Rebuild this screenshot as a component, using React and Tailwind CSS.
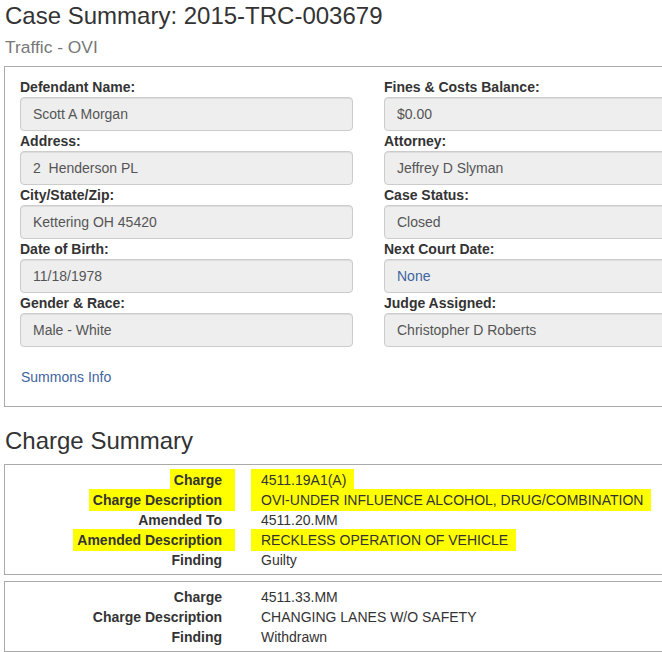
import React from "react";

const font = { fontFamily: '"Liberation Sans", Arial, Helvetica, sans-serif' };

function Field({ label, value, link }) {
  return (
    <div>
      <div className="text-[14px] leading-[20px] font-bold text-[#333]">{label}</div>
      <div className="h-[34px] rounded-[4px] border border-[#ccc] bg-[#eee] pl-[12px] flex items-center text-[14px] shadow-[inset_0_1px_1px_rgba(0,0,0,0.075)]">
        <span className={"whitespace-pre " + (link ? "text-[#41639f]" : "text-[#555]")}>{value}</span>
      </div>
    </div>
  );
}

function Row({ label, value, hl }) {
  return (
    <>
      <div className="text-right font-bold text-[#333]">
        {hl ? (
          <span className="bg-[#ffff00] pl-[4px] pr-[13px] -mr-[13px] py-[3px]">{label}</span>
        ) : (
          label
        )}
      </div>
      <div className="text-[#333]">
        {hl ? (
          <span className="bg-[#ffff00] pl-[10px] -ml-[10px] pr-[8px] py-[3px]">{value}</span>
        ) : (
          value
        )}
      </div>
    </>
  );
}

function ChargeBox({ rows, className }) {
  return (
    <div className={"w-[729px] border border-[#aaa] pt-[5px] pb-[4px] " + className}>
      <div className="grid grid-cols-[217px_1fr] gap-x-[39px] text-[14px] leading-[20px]">
        {rows.map((r, i) => (
          <Row key={i} {...r} />
        ))}
      </div>
    </div>
  );
}

export default function App() {
  return (
    <div className="w-[662px] h-[652px] overflow-hidden bg-white" style={font}>
      <div className="pl-[4px] pt-[1px]">
        <h1 className="pl-[1px] text-[24px] leading-[30px] text-[#333]">Case Summary: 2015-TRC-003679</h1>
        <div className="pl-[1px] mt-[5px] text-[17.4px] leading-[22px] text-[#777]">Traffic - OVI</div>

        <div className="mt-[8px] w-[729px] border border-[#aaa] px-[15px] pt-[10px] pb-[19px]">
          <div className="grid grid-cols-[333px_333px] gap-x-[31px]">
            <div>
              <Field label="Defendant Name:" value="Scott A Morgan" />
              <Field label="Address:" value="2  Henderson PL" />
              <Field label="City/State/Zip:" value="Kettering OH 45420" />
              <Field label="Date of Birth:" value="11/18/1978" />
              <Field label="Gender & Race:" value="Male - White" />
            </div>
            <div>
              <Field label="Fines & Costs Balance:" value="$0.00" />
              <Field label="Attorney:" value="Jeffrey D Slyman" />
              <Field label="Case Status:" value="Closed" />
              <Field label="Next Court Date:" value="None" link />
              <Field label="Judge Assigned:" value="Christopher D Roberts" />
            </div>
          </div>
          <div className="mt-[20px] pl-[1px] text-[14px] leading-[20px] text-[#41639f]">Summons Info</div>
        </div>

        <h2 className="pl-[1px] mt-[19px] text-[24px] leading-[30px] text-[#333]">Charge Summary</h2>

        <ChargeBox
          className="mt-[8px]"
          rows={[
            { label: "Charge", value: "4511.19A1(A)", hl: true },
            { label: "Charge Description", value: "OVI-UNDER INFLUENCE ALCOHOL, DRUG/COMBINATION", hl: true },
            { label: "Amended To", value: "4511.20.MM" },
            { label: "Amended Description", value: "RECKLESS OPERATION OF VEHICLE", hl: true },
            { label: "Finding", value: "Guilty" },
          ]}
        />
        <ChargeBox
          className="mt-[6px]"
          rows={[
            { label: "Charge", value: "4511.33.MM" },
            { label: "Charge Description", value: "CHANGING LANES W/O SAFETY" },
            { label: "Finding", value: "Withdrawn" },
          ]}
        />
      </div>
    </div>
  );
}
